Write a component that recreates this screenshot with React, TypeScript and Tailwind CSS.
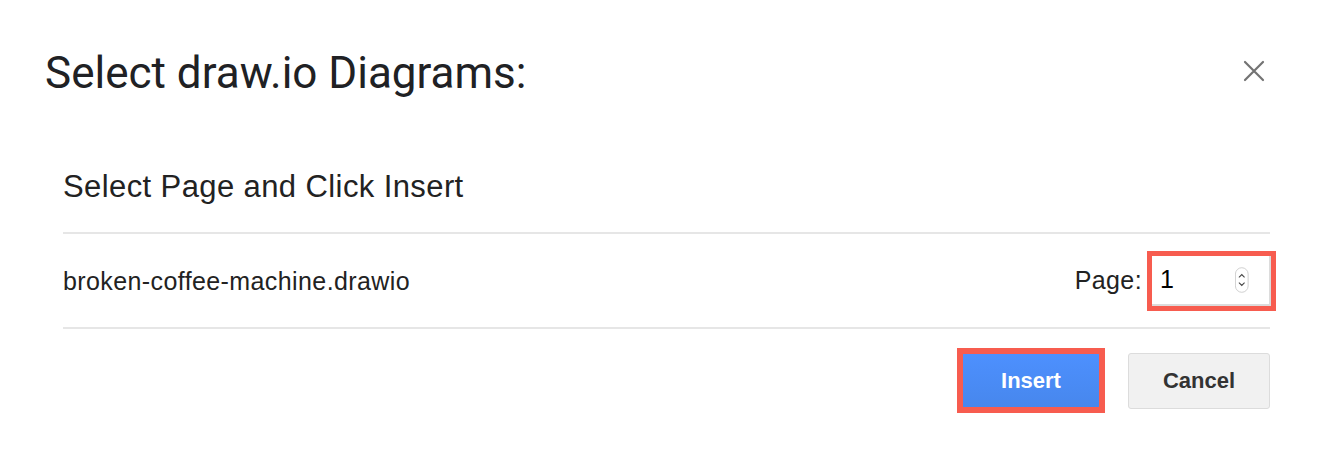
import React, { useState } from 'react';

const CloseIcon = () => (
  <svg width="22" height="22" viewBox="0 0 22 22" fill="none">
    <path d="M2 2 L20 20 M20 2 L2 20" stroke="#737373" strokeWidth="2.2" strokeLinecap="round" />
  </svg>
);

const Spinner = () => (
  <svg width="16" height="30" viewBox="0 0 16 30" fill="none">
    <rect x="0.5" y="0.5" width="15" height="29" rx="7.5" fill="#fff" stroke="#c8c8c8" />
    <path d="M5 11.5 L8 8.5 L11 11.5" stroke="#444" strokeWidth="1.3" fill="none" strokeLinecap="round" />
    <path d="M5 18.5 L8 21.5 L11 18.5" stroke="#444" strokeWidth="1.3" fill="none" strokeLinecap="round" />
  </svg>
);

export default function App() {
  const [page, setPage] = useState('1');

  return (
    <div className="w-[1328px] h-[450px] bg-white overflow-hidden">
      {/* Header */}
      <div className="h-[146px] flex items-center justify-between pl-[45px] pr-[63px]">
        <div className="text-[44px] text-[#202124] font-['Roboto',sans-serif]">
          Select draw.io Diagrams:
        </div>
        <button className="w-[22px] h-[22px] -mt-[4px] flex items-center justify-center">
          <CloseIcon />
        </button>
      </div>

      {/* Body */}
      <div className="pl-[63px] pr-[58px] font-['Liberation_Sans',Arial,sans-serif]">
        <div className="pt-[24px] pb-[28px] border-b-2 border-[#e6e6e6]">
          <div className="text-[31px] leading-[34px] tracking-[0.4px] text-[#222]">Select Page and Click Insert</div>
        </div>

        <div className="h-[95px] flex items-center justify-between border-b-2 border-[#e6e6e6]">
          <div className="text-[25px] tracking-[0.4px] text-[#222] pt-[3px]">broken-coffee-machine.drawio</div>
          <div className="flex items-center gap-[5px] -mr-[6px]">
            <span className="text-[25px] tracking-[0.4px] text-[#222]">Page:</span>
            <div className="border-[5px] border-[#f75c4f]">
              <div className="w-[119px] h-[50px] bg-white border-r-2 border-b-2 border-[#dcdcdc] flex items-center pl-[8px] pr-[20px]">
                <input
                  value={page}
                  onChange={(e) => setPage(e.target.value)}
                  className="w-full bg-transparent outline-none text-[25px] text-black"
                />
                <Spinner />
              </div>
            </div>
          </div>
        </div>

        <div className="pt-[19px] flex justify-end items-center gap-[23px]">
          <div className="border-[6px] border-[#f75c4f]">
            <button className="w-[136px] h-[53px] bg-gradient-to-b from-[#4d90fe] to-[#4787ed] text-white font-bold text-[22px]">
              Insert
            </button>
          </div>
          <button className="w-[142px] h-[56px] bg-[#f1f1f1] border border-[#dcdcdc] rounded-[3px] text-[#333] font-bold text-[22px]">
            Cancel
          </button>
        </div>
      </div>
    </div>
  );
}
